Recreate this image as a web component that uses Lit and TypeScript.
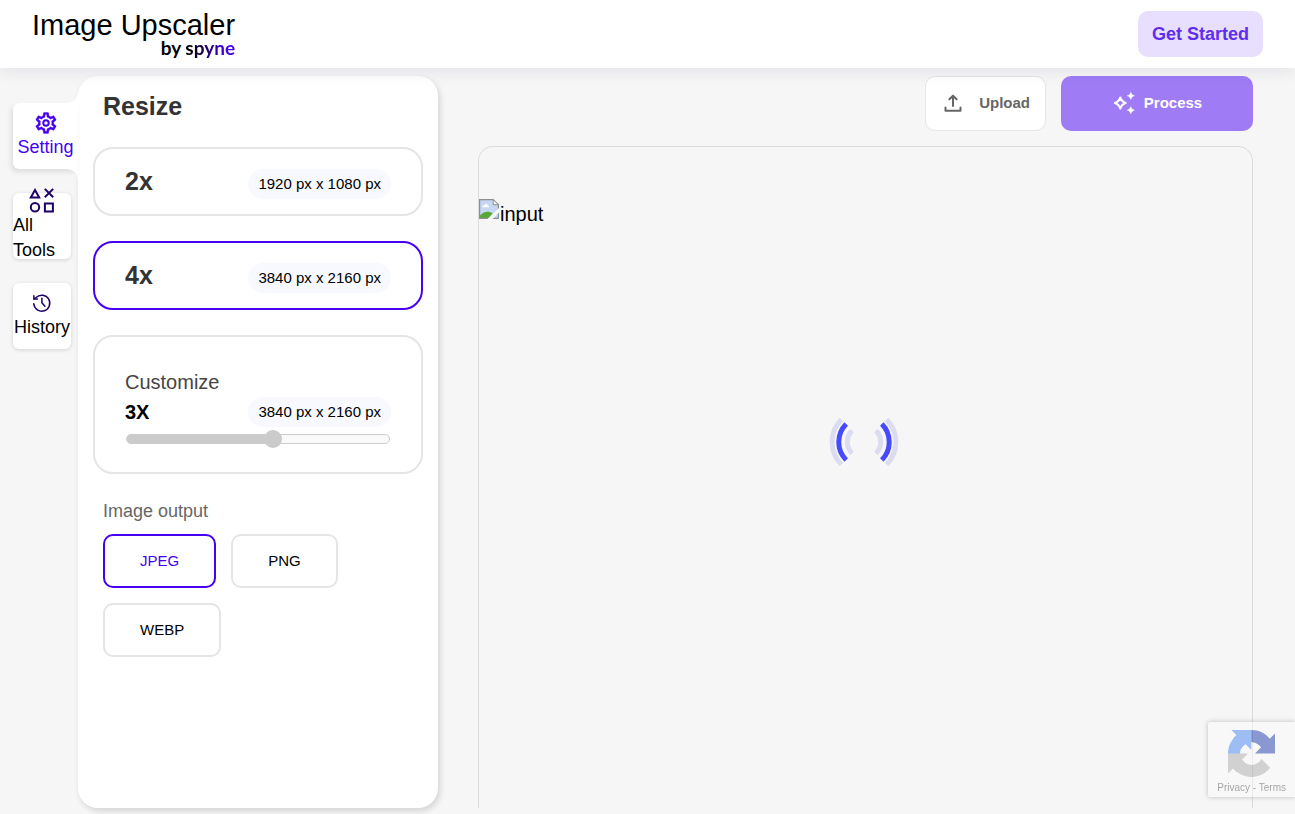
import { LitElement, html, css, svg } from "lit";
import { customElement, property, state } from "lit/decorators.js";
import { classMap } from "lit/directives/class-map.js";

const gearIcon = svg`<svg width="22" height="23" viewBox="1.5 1.5 21 22" aria-hidden="true">
  <path fill="currentColor" stroke="currentColor" stroke-width=".3" fill-rule="evenodd" d="M19.43 12.98c.04-.32.07-.64.07-.98 0-.34-.03-.66-.07-.98l2.11-1.65c.19-.15.24-.42.12-.64l-2-3.46c-.09-.16-.26-.25-.44-.25-.06 0-.12.01-.17.03l-2.49 1c-.52-.4-1.08-.73-1.69-.98l-.38-2.65C14.46 2.18 14.25 2 14 2h-4c-.25 0-.46.18-.49.42l-.38 2.65c-.61.25-1.17.59-1.69.98l-2.49-1c-.06-.02-.12-.03-.18-.03-.17 0-.34.09-.43.25l-2 3.46c-.13.22-.07.49.12.64l2.11 1.65c-.04.32-.07.65-.07.98 0 .33.03.66.07.98l-2.11 1.65c-.19.15-.24.42-.12.64l2 3.46c.09.16.26.25.44.25.06 0 .12-.01.17-.03l2.49-1c.52.4 1.08.73 1.69.98l.38 2.65c.03.24.24.42.49.42h4c.25 0 .46-.18.49-.42l.38-2.65c.61-.25 1.17-.59 1.69-.98l2.49 1c.06.02.12.03.18.03.17 0 .34-.09.43-.25l2-3.46c.12-.22.07-.49-.12-.64l-2.11-1.65zm-1.98-1.71c.04.31.05.52.05.73 0 .21-.02.43-.05.73l-.14 1.13.89.7 1.08.84-.7 1.21-1.27-.51-1.04-.42-.9.68c-.43.32-.84.56-1.25.73l-1.06.43-.16 1.13-.2 1.35h-1.4l-.19-1.35-.16-1.13-1.06-.43c-.43-.18-.83-.41-1.23-.71l-.91-.7-1.06.43-1.27.51-.7-1.21 1.08-.84.89-.7-.14-1.13c-.03-.31-.05-.54-.05-.74s.02-.43.05-.73l.14-1.13-.89-.7-1.08-.84.7-1.21 1.27.51 1.04.42.9-.68c.43-.32.84-.56 1.25-.73l1.06-.43.16-1.13.2-1.35h1.39l.19 1.35.16 1.13 1.06.43c.43.18.83.41 1.23.71l.91.7 1.06-.43 1.27-.51.7 1.21-1.07.85-.89.7.14 1.13z"/>
  <circle cx="12" cy="12" r="2.6" fill="none" stroke="currentColor" stroke-width="1.9"/>
</svg>`;

const toolsIcon = svg`<svg width="25" height="24" viewBox="0 1 25 24" overflow="visible" fill="none" stroke="#1f0066" stroke-width="2" aria-hidden="true">
  <path d="M5 2 9.200 9.400H.800z"/>
  <path d="m14.800.900 8.400 8.400m0-8.400-8.400 8.400"/>
  <circle cx="5" cy="19.300" r="4.200"/>
  <path d="M14.900 15.400h8v8h-8z"/>
</svg>`;

const historyIcon = svg`<svg width="22" height="23" viewBox="0 0 22 23" fill="none" stroke="#1f0066" stroke-width="1.500" stroke-linecap="round" stroke-linejoin="round" aria-hidden="true">
  <path d="M2.800 11.800a8 8 0 1 0 2.300-6.300L3 7"/>
  <path d="M2.900 3.700v3.400h3.400"/>
  <path d="M10.900 6.200v4.600l3 3.400"/>
</svg>`;

const uploadIcon = svg`<svg width="24" height="24" viewBox="0 0 24 24" fill="none" stroke="#666" stroke-width="2" stroke-linecap="round" stroke-linejoin="round" aria-hidden="true">
  <path d="M12 15V5M8.400 8.200 12 4.600l3.600 3.600"/>
  <path d="M4.500 16.500v3.300h15v-3.300"/>
</svg>`;

const sparkleIcon = svg`<svg width="24" height="24" viewBox="0 0 24 24" fill="#fff" aria-hidden="true">
  <path d="M8.300 6.400C9.300 9.700 10.400 10.900 13.700 12 10.400 13.100 9.300 14.300 8.300 17.600 7.300 14.300 6.200 13.100 2.900 12 6.200 10.900 7.300 9.700 8.300 6.400z" fill="none" stroke="#fff" stroke-width="2" stroke-linejoin="round"/>
  <path d="M18.800 1.200c.7 2.200 1.300 2.900 3.600 3.600-2.300.7-2.900 1.400-3.600 3.600-.7-2.200-1.300-2.900-3.600-3.600 2.300-.7 2.900-1.400 3.600-3.600z" stroke="#fff" stroke-width=".5"/>
  <path d="M18.800 15.600c.7 2.200 1.300 2.900 3.600 3.600-2.300.7-2.900 1.400-3.600 3.600-.7-2.200-1.300-2.900-3.600-3.600 2.300-.7 2.900-1.400 3.600-3.600z" stroke="#fff" stroke-width=".5"/>
</svg>`;

const brokenImageIcon = svg`<svg width="20" height="20" viewBox="0 0 20 20" aria-hidden="true">
  <path d="M.6.6h13.600l5.200 5.200v13.600H.6z" fill="#c5d7f5"/>
  <path d="M3 8.200c0-1.600 1.500-2 2.200-1.600.6-2.200 3.500-1.800 3.700 0 1.500-.1 1.800 1.600.6 1.600z" fill="#fff"/>
  <path d="M1 19v-2.500c3-3.600 8.500-5.200 12.500-2.200L10 19z" fill="#56aa34"/>
  <path d="M.6.6h13.600l5.200 5.200v13.600H.6z" fill="none" stroke="#8e8e8e" stroke-width="1.200"/>
  <path d="M14.200.6v5.200h5.200z" fill="#fff" stroke="#8e8e8e"/>
  <path d="M8.500 20 20 9v4.500L13.500 20z" fill="#f6f6f6"/>
</svg>`;

const loaderIcon = svg`<svg width="72" height="72" viewBox="-36 -36 72 72" fill="none" stroke-width="5" role="img" aria-label="Loading">
  <g stroke="#dcdcf1">
    <path d="M-22.600-22.600a32 32 0 0 0 0 45.200M22.600-22.600a32 32 0 0 1 0 45.200"/>
    <path d="M-12-11.500a16.500 16.500 0 0 0 0 23M12-11.500a16.500 16.500 0 0 1 0 23"/>
  </g>
  <path stroke="#474bff" d="M-17.800-18a25.500 25.500 0 0 0 0 36M17.800-18a25.500 25.500 0 0 1 0 36"/>
</svg>`;

const recaptchaIcon = svg`<svg width="47" height="47" viewBox="0 0 64 64" aria-hidden="true">
  <path d="M64 31.955l-.033-1.370V4.687l-7.160 7.160C50.948 4.674 42.033.093 32.050.093c-10.400 0-19.622 4.960-25.458 12.640l11.736 11.860a15.550 15.550 0 0 1 4.754-5.334c2.050-1.600 4.952-2.906 8.968-2.906.485 0 .860.057 1.135.163 4.976.393 9.288 3.140 11.828 7.124l-8.307 8.307L64 31.953" fill="#1c3aa9"/>
  <path d="M31.862.094l-1.370.033H4.594l7.160 7.160C4.580 13.147 0 22.060 0 32.046c0 10.400 4.960 19.622 12.640 25.458L24.500 45.768a15.550 15.550 0 0 1-5.334-4.754c-1.600-2.050-2.906-4.952-2.906-8.968 0-.485.057-.860.163-1.135.393-4.976 3.140-9.288 7.124-11.828l8.307 8.307L31.860.095" fill="#4285f4"/>
  <path d="M.001 32.045l.033 1.370v25.898l7.160-7.160c5.860 7.173 14.774 11.754 24.760 11.754 10.400 0 19.622-4.960 25.458-12.640l-11.736-11.860a15.550 15.550 0 0 1-4.754 5.334c-2.050 1.600-4.952 2.906-8.968 2.906-.485 0-.860-.057-1.135-.163-4.976-.393-9.288-3.140-11.828-7.124l8.307-8.307c-10.522.040-22.400.066-27.295-.005" fill="#ababab"/>
</svg>`;

const reset = css`
  * {
    box-sizing: border-box;
  }
  button {
    font: inherit;
    color: inherit;
    border: 0;
    background: none;
    padding: 0;
    margin: 0;
    text-align: left;
    cursor: pointer;
  }
  svg {
    display: block;
    flex: none;
  }
  h1,
  h2,
  p {
    margin: 0;
  }
`;

@customElement("site-header")
class SiteHeader extends LitElement {
  static styles = [
    reset,
    css`
      :host {
        display: flex;
        align-items: center;
        justify-content: space-between;
        min-height: 68px;
        padding: 0 32px;
        background: #fff;
        box-shadow: 0 4px 16px rgba(20, 10, 80, 0.08);
        position: relative;
      }
      .brand {
        display: flex;
        flex-direction: column;
        align-items: flex-end;
      }
      .title {
        font-size: 29px;
        line-height: 28px;
        font-weight: 400;
      }
      .byline {
        font-family: Lato, sans-serif;
        font-size: 19px;
        line-height: 18px;
        font-weight: 700;
      }
      .maker {
        background: linear-gradient(90deg, #000 10%, #4600f2 85%);
        background-clip: text;
        -webkit-background-clip: text;
        color: transparent;
      }
      .start {
        height: 46px;
        padding: 0 14px;
        border-radius: 10px;
        background: #e8dfff;
        color: #5f2ded;
        font-size: 18px;
        font-weight: 700;
      }
    `,
  ];
  render() {
    return html`
      <div class="brand">
        <h1 class="title">Image Upscaler</h1>
        <p class="byline">by <span class="maker">spyne</span></p>
      </div>
      <button class="start">Get Started</button>
    `;
  }
}

@customElement("side-tabs")
class SideTabs extends LitElement {
  @state() private current = "Setting";

  private tabs = [
    { name: "Setting", icon: gearIcon },
    { name: "All Tools", icon: toolsIcon },
    { name: "History", icon: historyIcon },
  ];

  static styles = [
    reset,
    css`
      :host {
        display: block;
        padding: 27px 0 0 13px;
      }
      .tabs {
        display: flex;
        flex-direction: column;
        gap: 24px;
      }
      .tab {
        display: flex;
        flex-direction: column;
        align-items: center;
        justify-content: center;
        width: 58px;
        height: 66px;
        border-radius: 6px;
        background: #fff;
        box-shadow: 0 1px 4px rgba(0, 0, 0, 0.14);
        font-size: 18px;
        line-height: 25px;
      }
      .current {
        position: relative;
        width: auto;
        border-radius: 6px 0 0 6px;
        box-shadow: -2px 3px 5px rgba(0, 0, 0, 0.1);
        color: #4600f2;
      }
      .current::before,
      .current::after {
        content: "";
        position: absolute;
        right: 0;
        width: 10px;
        height: 10px;
      }
      .current::before {
        bottom: 100%;
        background: radial-gradient(circle at 0 0, transparent 9px, #fff 10px);
      }
      .current::after {
        top: 100%;
        background: radial-gradient(circle at 0 100%, transparent 9px, #fff 10px);
      }
    `,
  ];
  render() {
    return html`<nav class="tabs">
      ${this.tabs.map(
        (t) => html`<button
          class=${classMap({ tab: true, current: t.name === this.current })}
          @click=${() => (this.current = t.name)}
        >
          ${t.icon}<span>${t.name}</span>
        </button>`
      )}
    </nav>`;
  }
}

@customElement("resize-panel")
class ResizePanel extends LitElement {
  @state() private scale = "4x";
  @state() private format = "JPEG";
  @property({ type: Number }) position = 56;

  private scales = [
    { name: "2x", size: "1920 px x 1080 px" },
    { name: "4x", size: "3840 px x 2160 px" },
  ];
  private formats = ["JPEG", "PNG", "WEBP"];

  static styles = [
    reset,
    css`
      :host {
        display: block;
        box-sizing: border-box;
        padding: 15px;
        border-radius: 20px;
        background: #fff;
        box-shadow: 2px 3px 6px rgba(0, 0, 0, 0.14);
      }
      .heading {
        margin: 0 10px 26px;
        font-size: 25px;
        line-height: 30px;
        color: #333;
      }
      .options {
        display: flex;
        flex-direction: column;
        gap: 25px;
      }
      .card {
        border: 2px solid #e5e5e5;
        border-radius: 20px;
        background: #fff;
      }
      .scale {
        display: flex;
        align-items: flex-start;
        justify-content: space-between;
        padding: 20px 30px 15px;
      }
      .factor {
        font-size: 25px;
        line-height: 25px;
        font-weight: 700;
        color: #333;
      }
      .size {
        padding: 0 10px;
        border-radius: 15px;
        background: #f8f9ff;
        font-size: 15px;
        line-height: 30px;
        color: #000;
      }
      .custom {
        padding: 30px 30px 21px;
        font-size: 20px;
        line-height: 30px;
      }
      .label {
        display: block;
        color: #444;
      }
      .row {
        display: flex;
        justify-content: space-between;
      }
      .range {
        display: block;
        appearance: none;
        width: calc(100% - 2px);
        height: 24px;
        margin: 0 auto;
        background: none;
      }
      .range::-webkit-slider-runnable-track {
        height: 10px;
        border: 1px solid #cdcdcd;
        border-radius: 5px;
        background: linear-gradient(90deg, #cbcbcb 56%, #fafafa 56%);
      }
      .range::-webkit-slider-thumb {
        appearance: none;
        width: 18px;
        height: 18px;
        margin-top: -5px;
        border-radius: 50%;
        background: #cbcbcb;
      }
      .output {
        margin: 25px 10px 0;
      }
      .caption {
        margin-bottom: 10px;
        font-size: 18px;
        line-height: 25px;
        color: #666;
      }
      .formats {
        display: flex;
        flex-wrap: wrap;
        gap: 15px;
      }
      .format {
        height: 54px;
        padding: 0 35px 2px;
        border-radius: 10px;
        font-size: 15px;
      }
      .scale.chosen,
      .format.chosen {
        border-color: #4600f2;
      }
      .format.chosen {
        color: #4600f2;
      }
    `,
  ];
  render() {
    return html`
      <h2 class="heading">Resize</h2>
      <div class="options">
        ${this.scales.map(
          (s) => html`<button
            class=${classMap({ card: true, scale: true, chosen: s.name === this.scale })}
            aria-pressed=${s.name === this.scale}
            @click=${() => (this.scale = s.name)}
          >
            <span class="factor">${s.name}</span><span class="size">${s.size}</span>
          </button>`
        )}
        <div class="card custom">
          <label class="label" for="custom">Customize</label>
          <div class="row"><b>3X</b><span class="size">3840 px x 2160 px</span></div>
          <input id="custom" class="range" type="range" min="0" max="100" .value=${String(this.position)} disabled />
        </div>
      </div>
      <div class="output">
        <p class="caption">Image output</p>
        <div class="formats">
          ${this.formats.map(
            (f) => html`<button
              class=${classMap({ card: true, format: true, chosen: f === this.format })}
              aria-pressed=${f === this.format}
              @click=${() => (this.format = f)}
            >${f}</button>`
          )}
        </div>
      </div>
    `;
  }
}

@customElement("work-area")
class WorkArea extends LitElement {
  static styles = [
    reset,
    css`
      :host {
        display: flex;
        flex-direction: column;
        gap: 15px;
        min-width: 0;
      }
      .toolbar {
        display: flex;
        justify-content: flex-end;
        gap: 15px;
      }
      .action {
        display: flex;
        align-items: center;
        justify-content: center;
        height: 55px;
        border-radius: 10px;
        font-size: 15px;
        font-weight: 700;
      }
      .upload {
        gap: 14px;
        padding: 0 15px 2px;
        border: 1px solid #e5e5e5;
        background: #fff;
        color: #666;
      }
      .process {
        gap: 8px;
        width: 192px;
        padding-bottom: 2px;
        background: #9f7cf5;
        color: #fff;
      }
      .canvas {
        position: relative;
        flex: 1;
        padding-top: 52px;
        border: 1px solid #dcdcdc;
        border-bottom: 0;
        border-radius: 15px 15px 0 0;
      }
      .preview {
        display: flex;
        font-size: 20px;
        line-height: 30px;
        gap: 1px;
      }
      .loader {
        position: absolute;
        inset: 0 4px 72px 0;
        display: grid;
        place-items: center;
      }
    `,
  ];
  render() {
    return html`
      <div class="toolbar">
        <button class="action upload">${uploadIcon}Upload</button>
        <button class="action process">${sparkleIcon}Process</button>
      </div>
      <div class="canvas">
        <div class="preview">${brokenImageIcon}<span>input</span></div>
        <div class="loader">${loaderIcon}</div>
      </div>
    `;
  }
}

@customElement("captcha-badge")
class CaptchaBadge extends LitElement {
  static styles = [
    reset,
    css`
      :host {
        position: fixed;
        right: 0;
        bottom: 17px;
        display: flex;
        flex-direction: column;
        align-items: center;
        gap: 4px;
        padding: 8px 9px 3px;
        border-radius: 2px 0 0 2px;
        background: #f9f9f9;
        box-shadow: 0 0 5px gray;
        opacity: 0.5;
        font-size: 10px;
        line-height: 13px;
        color: #555;
      }
      .link {
        color: inherit;
        text-decoration: none;
      }
    `,
  ];
  render() {
    return html`${recaptchaIcon}
      <div><a class="link" href="#privacy">Privacy</a> - <a class="link" href="#terms">Terms</a></div>`;
  }
}

@customElement("app-root")
class AppRoot extends LitElement {
  static styles = [
    reset,
    css`
      :host {
        display: flex;
        flex-direction: column;
        min-height: 100vh;
        background: #f6f6f6;
        color: #000;
        font-family: "Liberation Sans", Arial, sans-serif;
      }
      .main {
        flex: 1;
        display: grid;
        grid-template-columns: 78px 360px minmax(0, 1fr);
        padding: 8px 42px 6px 0;
      }
      .work {
        margin-left: 40px;
      }
      .tabs {
        position: relative;
      }
    `,
  ];
  render() {
    return html`
      <site-header></site-header>
      <main class="main">
        <side-tabs class="tabs"></side-tabs>
        <resize-panel></resize-panel>
        <work-area class="work"></work-area>
      </main>
      <captcha-badge></captcha-badge>
    `;
  }
}
